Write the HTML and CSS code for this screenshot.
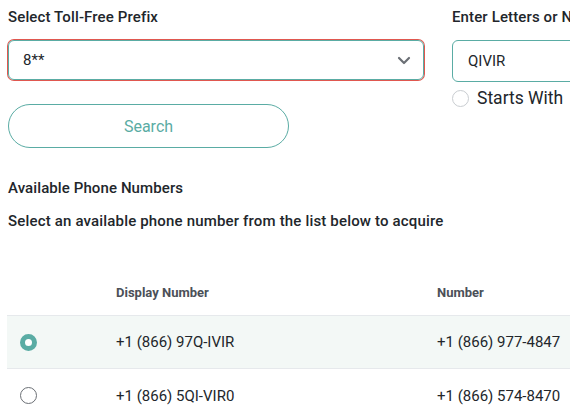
FILE: index.html
```html
<!DOCTYPE html>
<html>
<head>
<meta charset="utf-8">
<link rel="stylesheet" href="styles.css">
</head>
<body>
<div class="page">
  <div class="top">
    <div class="col-left">
      <div class="label">Select Toll-Free Prefix</div>
      <div class="select">
        <span class="select-value">8**</span>
        <svg class="chevron" width="14" height="9" viewBox="0 0 14 9"><path d="M2 2 L7 7 L12 2" fill="none" stroke="#6b6f75" stroke-width="2.2" stroke-linecap="round" stroke-linejoin="round"/></svg>
      </div>
      <button class="search">Search</button>
    </div>
    <div class="col-right">
      <div class="label nowrap">Enter Letters or Numbers</div>
      <div class="input">QIVIR</div>
      <div class="starts">
        <span class="radio"></span>
        <span class="starts-text">Starts With</span>
      </div>
    </div>
  </div>
  <div class="section-title">Available Phone Numbers</div>
  <div class="section-sub">Select an available phone number from the list below to acquire</div>
  <div class="table">
    <div class="row head">
      <div class="c1"></div>
      <div class="c2">Display Number</div>
      <div class="c3">Number</div>
    </div>
    <div class="row selected">
      <div class="c1"><span class="radio on"></span></div>
      <div class="c2">+1 (866) 97Q-IVIR</div>
      <div class="c3">+1 (866) 977-4847</div>
    </div>
    <div class="row">
      <div class="c1"><span class="radio dark"></span></div>
      <div class="c2">+1 (866) 5QI-VIR0</div>
      <div class="c3">+1 (866) 574-8470</div>
    </div>
  </div>
</div>
</body>
</html>
```
FILE: styles.css
```css
* { box-sizing: border-box; }
html, body { margin: 0; padding: 0; background: #ffffff; overflow: hidden; }
body { font-family: Roboto, "Liberation Sans", sans-serif; color: #1f2328; width: 570px; height: 415px; }
.page { padding: 7px 0 0 8px; width: 900px; }
.top { display: flex; gap: 28px; }
.col-left { width: 416px; display: flex; flex-direction: column; }
.col-right { width: 300px; display: flex; flex-direction: column; }
.label { font-size: 15px; letter-spacing: 0.13px; line-height: 20px; font-weight: 500; color: #22262b; margin-bottom: 13px; }
.nowrap { white-space: nowrap; }
.select {
  height: 40px; border: 1px solid #5aaca4; border-radius: 6px;
  box-shadow: 0 0 0 1px #e0574f;
  display: flex; align-items: center; justify-content: space-between;
  padding: 0 12px 0 14px;
}
.select-value { font-size: 15px; color: #22262b; }
.chevron { display: block; }
.search {
  margin-top: 24px; width: 281px; height: 44px; border: 1px solid #5aaca4; border-radius: 22px;
  background: #fff; color: #5aaca4; font-family: Roboto, "Liberation Sans", sans-serif; font-size: 16px;
  padding: 0;
}
.input {
  height: 42px; border: 1px solid #5aaca4; border-radius: 6px;
  display: flex; align-items: center; padding-left: 15px; font-size: 15px; color: #22262b;
}
.starts { display: flex; align-items: center; gap: 8px; margin-top: 6px; }
.starts-text { font-size: 17.5px; line-height: 20px; color: #22262b; }
.radio {
  display: inline-block; width: 17px; height: 17px; border-radius: 50%;
  border: 1px solid #c9cdd1; background: #fff; flex: none;
}
.radio.dark { border-color: #6b6f75; }
.radio.on { border: 5px solid #5aaca4; background: #fff; }
.section-title { margin-top: 30px; font-size: 15px; letter-spacing: 0.1px; line-height: 20px; font-weight: 500; color: #22262b; }
.section-sub { margin-top: 13px; font-size: 15px; letter-spacing: 0.17px; line-height: 20px; font-weight: 500; color: #22262b; }
.table { margin-top: 39px; width: 700px; margin-left: -1px; }
.row { display: flex; align-items: center; height: 53px; border-bottom: 1px solid #e6e9ec; font-size: 15px; color: #22262b; }
.row:last-child { border-bottom: none; }
.row.head { height: 46px; font-size: 13px; font-weight: 700; color: #4b5058; }
.row.selected { background: #f3f8f6; }
.c1 { width: 109px; padding-left: 13px; display: flex; align-items: center; }
.c2 { width: 321px; }
.c3 { flex: 1; }
```
